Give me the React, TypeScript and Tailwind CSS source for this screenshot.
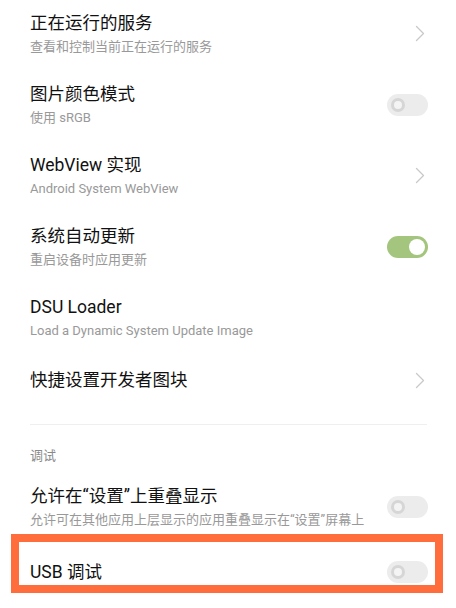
import React from "react";

type Row = {
  title: string;
  sub?: string;
  kind: "chevron" | "off" | "on" | "none";
  h: string;
};

const font = { fontFamily: 'Roboto, "Noto Sans CJK SC", sans-serif' };

function Chevron() {
  return (
    <svg width="10" height="17" viewBox="0 0 10 17" fill="none" className="shrink-0">
      <path d="M1.5 1.5 L8.5 8.5 L1.5 15.5" stroke="#c9c9c9" strokeWidth="1.3" strokeLinecap="round" strokeLinejoin="round" />
    </svg>
  );
}

function Toggle({ on }: { on: boolean }) {
  if (on) {
    return (
      <div className="flex h-[22px] w-[41px] shrink-0 items-center justify-end rounded-full bg-[#a4c57d] pr-[3px]">
        <div className="h-[16px] w-[16px] rounded-full bg-white" />
      </div>
    );
  }
  return (
    <div className="flex h-[22px] w-[41px] shrink-0 items-center rounded-full bg-[#ececec] pl-[4px]">
      <div className="flex h-[14px] w-[14px] items-center justify-center rounded-full bg-[#d6d6d6]">
        <div className="h-[8px] w-[8px] rounded-full bg-[#f4f4f4]" />
      </div>
    </div>
  );
}

function SettingRow({ row }: { row: Row }) {
  return (
    <div className={`flex items-center justify-between pl-[30px] ${row.kind === "chevron" ? "pr-[31px]" : "pr-[28px]"} ${row.h}`}>
      <div className="flex flex-col">
        <span className="text-[17.5px] leading-[24px] text-[#111111]">{row.title}</span>
        {row.sub && <span className="mt-[3px] text-[13px] leading-[18px] text-[#999999]">{row.sub}</span>}
      </div>
      {row.kind === "chevron" && <Chevron />}
      {row.kind === "off" && <Toggle on={false} />}
      {row.kind === "on" && <Toggle on={true} />}
    </div>
  );
}

const top: Row[] = [
  { title: "正在运行的服务", sub: "查看和控制当前正在运行的服务", kind: "chevron", h: "h-[71px]" },
  { title: "图片颜色模式", sub: "使用 sRGB", kind: "off", h: "h-[71px]" },
  { title: "WebView 实现", sub: "Android System WebView", kind: "chevron", h: "h-[71px]" },
  { title: "系统自动更新", sub: "重启设备时应用更新", kind: "on", h: "h-[71px]" },
  { title: "DSU Loader", sub: "Load a Dynamic System Update Image", kind: "none", h: "h-[71px]" },
  { title: "快捷设置开发者图块", kind: "chevron", h: "h-[54px]" },
];

const debug: Row[] = [
  { title: "允许在“设置”上重叠显示", sub: "允许可在其他应用上层显示的应用重叠显示在“设置”屏幕上", kind: "off", h: "h-[71px]" },
  { title: "USB 调试", kind: "off", h: "h-[60px]" },
];

export default function App() {
  return (
    <div className="relative h-[608px] w-[456px] overflow-hidden bg-white" style={font}>
      <div className="-mt-[2px] flex flex-col">
        {top.map((r) => (
          <SettingRow key={r.title} row={r} />
        ))}
        <div className="mx-[30px] mr-[29px] mt-[17px] h-px bg-[#efefef]" />
        <div className="px-[30px] pt-[22px] text-[13px] leading-[18px] text-[#8a8a8a]">调试</div>
        <div className="h-[6px]" />
        {debug.map((r) => (
          <SettingRow key={r.title} row={r} />
        ))}
      </div>
      <div className="pointer-events-none absolute left-[11px] top-[534px] h-[59px] w-[432px] border-[8px] border-[#ff6d3c]" />
    </div>
  );
}
